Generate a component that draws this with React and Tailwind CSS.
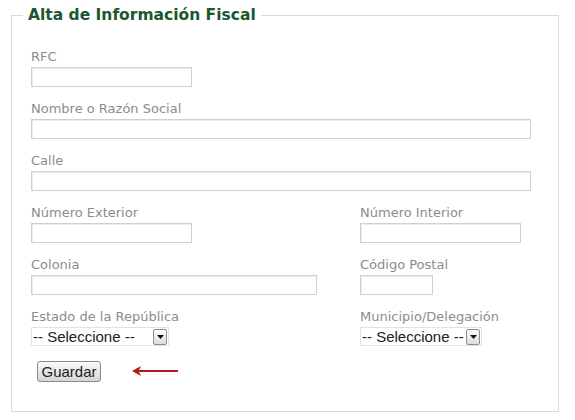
const Field = ({ label, width }) => (
  <div className="flex flex-col">
    <label className="text-[13px] leading-4 text-[#8c8c8c] mb-[2px] font-['DejaVu_Sans',sans-serif]">{label}</label>
    <input
      type="text"
      className="h-5 border border-[#d0d0d0] bg-white shadow-[inset_1px_1px_0_#ececec] outline-none"
      style={{ width }}
    />
  </div>
);

const SelectBox = ({ label, width }) => (
  <div className="flex flex-col">
    <label className="text-[13px] leading-4 text-[#8c8c8c] mb-[2px] font-['DejaVu_Sans',sans-serif]">{label}</label>
    <div
      className="h-[19px] flex items-center justify-between border border-[#e2e2e2] bg-white pl-[1px] pr-[1px]"
      style={{ width }}
    >
      <span className="shrink-0 text-[15px] leading-none text-[#222] font-['Liberation_Sans',Arial,sans-serif]">-- Seleccione --</span>
      <span className="shrink-0 w-[14px] h-[16px] flex items-center justify-center border border-[#8e8e8e] rounded-[2px] bg-gradient-to-b from-white to-[#dcdcdc]">
        <svg width="7" height="4" viewBox="0 0 7 4">
          <path d="M0 0h7L3.5 4z" fill="#111" />
        </svg>
      </span>
    </div>
  </div>
);

export default function App() {
  return (
    <div className="bg-white min-h-[420px] w-[575px] pt-[5px] pl-[11px]">
      <fieldset className="w-[548px] h-[407px] border border-[#dadada] pl-[19px] pt-6">
        <legend className="-ml-2 px-[5px] text-[15.5px] leading-5 font-bold text-[#1b5632] font-['DejaVu_Sans',sans-serif]">
          Alta de Información Fiscal
        </legend>

        <div className="flex flex-col gap-[14px]">
          <Field label="RFC" width={161} />
          <Field label="Nombre o Razón Social" width={500} />
          <Field label="Calle" width={500} />

          <div className="grid grid-cols-[329px_1fr]">
            <Field label="Número Exterior" width={161} />
            <Field label="Número Interior" width={161} />
          </div>

          <div className="grid grid-cols-[329px_1fr]">
            <Field label="Colonia" width={286} />
            <Field label="Código Postal" width={73} />
          </div>

          <div className="grid grid-cols-[329px_1fr]">
            <SelectBox label="Estado de la República" width={138} />
            <SelectBox label="Municipio/Delegación" width={122} />
          </div>

          <div className="flex items-center">
            <button className="ml-[6px] mt-[1px] w-[64px] h-[21px] rounded-[3px] border border-[#8a8a8a] bg-gradient-to-b from-[#fafafa] to-[#d6d6d6] text-[15px] leading-none text-[#222] font-['Liberation_Sans',Arial,sans-serif]">
              Guardar
            </button>
            <svg className="ml-[31px]" width="46" height="10" viewBox="0 0 46 10">
              <path d="M46 5H4" stroke="#b3191c" strokeWidth="2.2" />
              <path d="M0 5L9 0L6.5 5L9 10z" fill="#b3191c" />
            </svg>
          </div>
        </div>
      </fieldset>
    </div>
  );
}
